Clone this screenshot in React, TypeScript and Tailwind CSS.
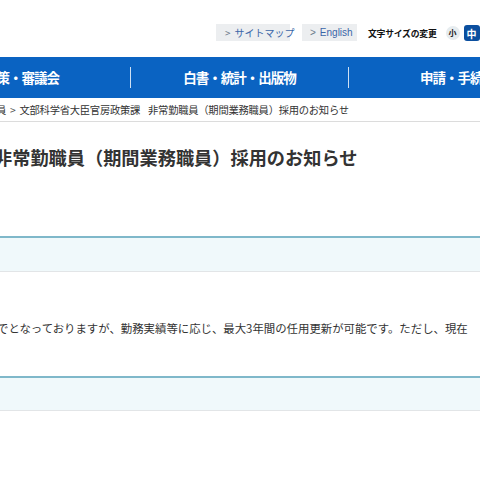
import React from 'react';

const jp = { fontFamily: '"Noto Sans CJK JP", "Noto Sans", sans-serif' };

const navItems = ['政策・審議会', '白書・統計・出版物', '申請・手続き'];

export default function App() {
  return (
    <div className="w-[480px] h-[480px] overflow-hidden bg-white text-[#333]" style={jp}>
      {/* top utility bar */}
      <div className="h-[57px] flex items-start pt-[24px] pl-[216px] whitespace-nowrap">
        <div className="h-[17px] w-[74px] bg-[#eceef0] flex items-center pl-[9px] text-[10px] text-[#3a66a8]">
          <span className="mr-[4px] text-[#6a7a8a]">&gt;</span>サイトマップ
        </div>
        <div className="ml-[12px] h-[17px] w-[55px] bg-[#eceef0] flex items-center pl-[8px] text-[10px] text-[#3a66a8]" style={{ fontFamily: '"Liberation Sans", sans-serif' }}>
          <span className="mr-[4px] text-[#6a7a8a]">&gt;</span>English
        </div>
        <div className="ml-[11px] mt-[3px] text-[8.8px] font-bold text-[#111] tracking-[-0.2px]">文字サイズの変更</div>
        <div className="ml-[9px] mt-[2px] w-[14px] h-[14px] rounded-full bg-[#e6ecef] flex items-center justify-center text-[8px] font-bold text-[#222]">小</div>
        <div className="ml-[4px] mt-[1px] w-[16px] h-[16px] rounded-[3px] bg-[#0b4f9f] flex items-center justify-center text-[10px] font-bold text-white">中</div>
      </div>

      {/* global nav */}
      <div className="h-[41px] bg-[#0a63c2] flex items-center whitespace-nowrap">
        <div className="flex items-center -ml-[87px]">
          {navItems.map((label, i) => (
            <div key={label} className="flex items-center">
              {i > 0 && <span className="w-px h-[21px] bg-white/80" />}
              <div className="w-[217px] text-center text-white text-[13.5px] font-bold tracking-[-1px]">{label}</div>
            </div>
          ))}
        </div>
      </div>

      {/* breadcrumb */}
      <div className="h-[24px] border-b border-[#dcdcdc] flex items-center -ml-[4px] text-[10.3px] tracking-[-0.25px] text-[#333] whitespace-nowrap">
        <span>員</span>
        <span className="mx-[4px] text-[#555]">&gt;</span>
        <span>文部科学省大臣官房政策課</span>
        <span className="ml-[8px]">非常勤職員（期間業務職員）採用のお知らせ</span>
      </div>

      {/* title */}
      <h1 className="mt-[24px] -ml-[6px] text-[18.2px] leading-[22px] font-bold text-[#333] whitespace-nowrap">
        非常勤職員（期間業務職員）採用のお知らせ
      </h1>

      {/* panel 1 */}
      <div className="mt-[68px] h-[36px] border-t-2 border-[#7fb8ca] border-b border-b-[#e2e5e7] bg-[#f0f9fb]" />

      {/* body line */}
      <p className="mt-[48px] -ml-[3px] text-[11.4px] leading-[16px] text-[#333] whitespace-nowrap">
        でとなっておりますが、勤務実績等に応じ、最大3年間の任用更新が可能です。ただし、現在
      </p>

      {/* panel 2 */}
      <div className="mt-[40px] h-[35px] border-t-2 border-[#7fb8ca] border-b border-b-[#e2e5e7] bg-[#f0f9fb]" />
    </div>
  );
}
